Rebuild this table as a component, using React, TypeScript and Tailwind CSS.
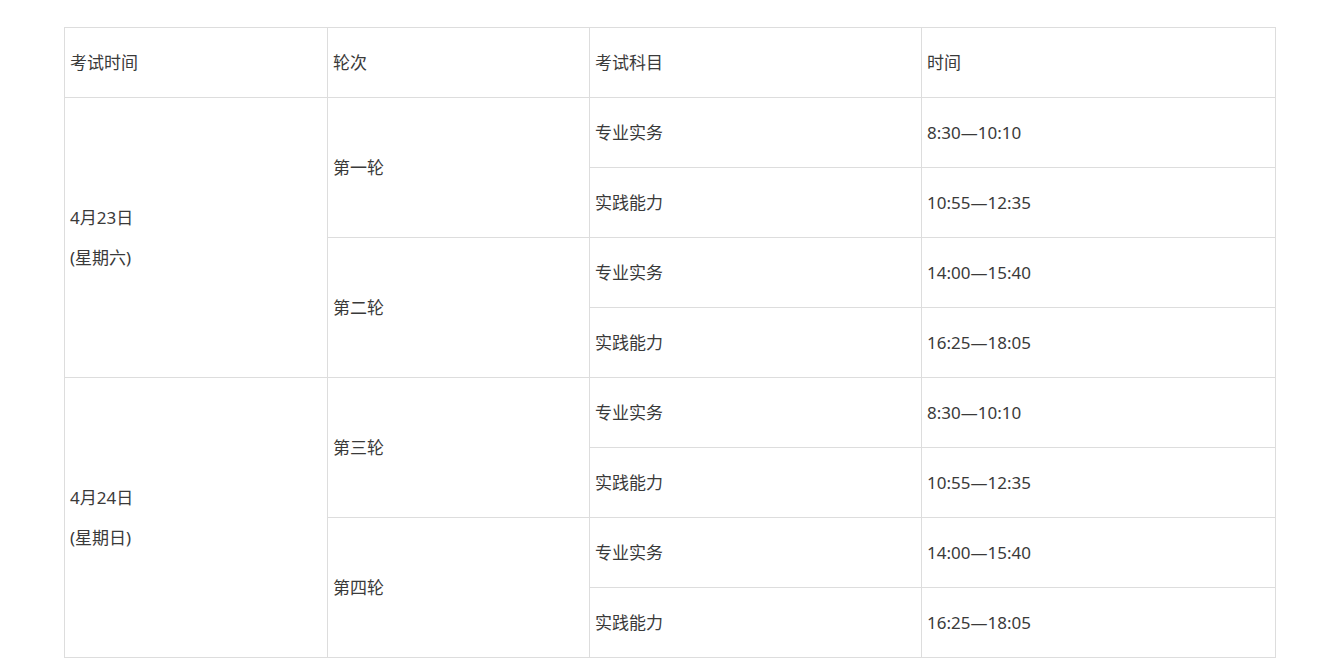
const rounds = [
  {
    date: '4月23日',
    week: '(星期六)',
    rounds: [
      { name: '第一轮', items: [['专业实务', '8:30—10:10'], ['实践能力', '10:55—12:35']] },
      { name: '第二轮', items: [['专业实务', '14:00—15:40'], ['实践能力', '16:25—18:05']] },
    ],
  },
  {
    date: '4月24日',
    week: '(星期日)',
    rounds: [
      { name: '第三轮', items: [['专业实务', '8:30—10:10'], ['实践能力', '10:55—12:35']] },
      { name: '第四轮', items: [['专业实务', '14:00—15:40'], ['实践能力', '16:25—18:05']] },
    ],
  },
];

const cell = 'border border-[#dddddd] px-[5px] align-middle text-left font-normal';

export default function App() {
  return (
    <div
      className="min-h-screen bg-white pt-[27px] pl-[64px] text-[17px] text-[#3a3a3a]"
      style={{ fontFamily: '"Noto Sans", "Noto Sans CJK SC", sans-serif' }}
    >
      <table className="w-[1211px] table-fixed border-collapse">
        <colgroup>
          <col className="w-[263px]" />
          <col className="w-[262px]" />
          <col className="w-[332px]" />
          <col className="w-[354px]" />
        </colgroup>
        <thead>
          <tr className="h-[70px]">
            <th className={cell}>考试时间</th>
            <th className={cell}>轮次</th>
            <th className={cell}>考试科目</th>
            <th className={cell}>时间</th>
          </tr>
        </thead>
        <tbody>
          {rounds.map((day) =>
            day.rounds.map((r, ri) =>
              r.items.map((item, ii) => (
                <tr key={day.date + r.name + ii} className="h-[70px]">
                  {ri === 0 && ii === 0 && (
                    <td rowSpan={4} className={cell}>
                      <div className="leading-[40px]">
                        <p>{day.date}</p>
                        <p>{day.week}</p>
                      </div>
                    </td>
                  )}
                  {ii === 0 && (
                    <td rowSpan={2} className={cell}>
                      {r.name}
                    </td>
                  )}
                  <td className={cell}>{item[0]}</td>
                  <td className={cell}>{item[1]}</td>
                </tr>
              ))
            )
          )}
        </tbody>
      </table>
    </div>
  );
}
